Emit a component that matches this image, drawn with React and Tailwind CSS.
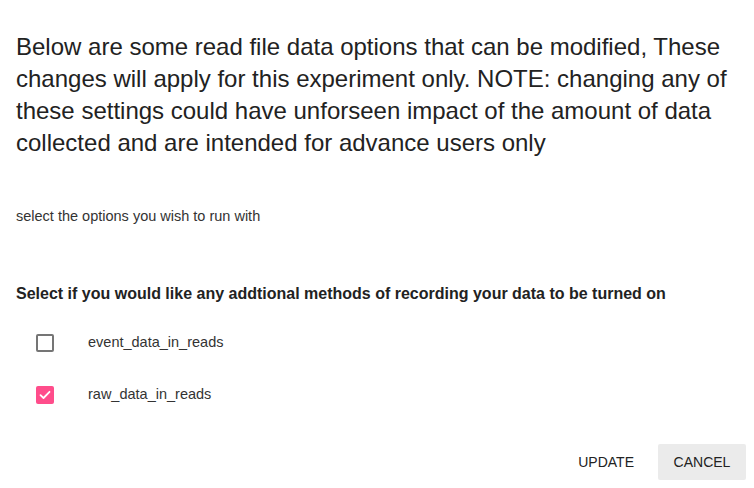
import { useState } from "react";

const Check = ({ checked, onChange }) => (
  <button
    type="button"
    onClick={onChange}
    className={
      "w-[18px] h-[18px] rounded-[2px] flex items-center justify-center " +
      (checked ? "bg-[#ff4d8b]" : "border-2 border-[#757575] bg-white")
    }
  >
    {checked && (
      <svg width="12" height="10" viewBox="0 0 12 10" fill="none">
        <path d="M1.5 5.2 L4.5 8 L10.5 1.8" stroke="#ffffff" strokeWidth="1.8" strokeLinecap="round" strokeLinejoin="round" />
      </svg>
    )}
  </button>
);

export default function App() {
  const [opts, setOpts] = useState({ event_data_in_reads: false, raw_data_in_reads: true });

  const toggle = (key) => setOpts({ ...opts, [key]: !opts[key] });

  return (
    <div className="w-[754px] h-[488px] bg-white text-[#222] font-['Liberation_Sans',Arial,sans-serif] flex flex-col">
      <p className="pt-[31px] px-4 text-[24px] leading-[32px] text-[#222]">
        Below are some read file data options that can be modified, These changes will apply for this experiment only.
        NOTE: changing any of these settings could have unforseen impact of the amount of data collected and are
        intended for advance users only
      </p>

      <p className="mt-[47px] px-4 text-[14.5px] leading-[21px] text-[#333]">select the options you wish to run with</p>

      <h4 className="mt-[55px] px-4 text-[16px] leading-[24px] font-bold text-[#222]">
        Select if you would like any addtional methods of recording your data to be turned on
      </h4>

      <div className="mt-[28px] flex flex-col gap-[34px] pl-9">
        {Object.keys(opts).map((key) => (
          <label key={key} className="flex items-center h-[18px] cursor-pointer">
            <Check checked={opts[key]} onChange={() => toggle(key)} />
            <span className="ml-[34px] text-[14.5px] text-[#333]">{key}</span>
          </label>
        ))}
      </div>

      <div className="mt-auto mb-2 flex justify-end gap-2 pr-2">
        <button className="h-9 px-4 text-[14px] text-[#222] uppercase rounded-[2px]">Update</button>
        <button className="h-9 w-[88px] text-[14px] text-[#222] uppercase bg-[#ebebeb] rounded-[2px]">Cancel</button>
      </div>
    </div>
  );
}
